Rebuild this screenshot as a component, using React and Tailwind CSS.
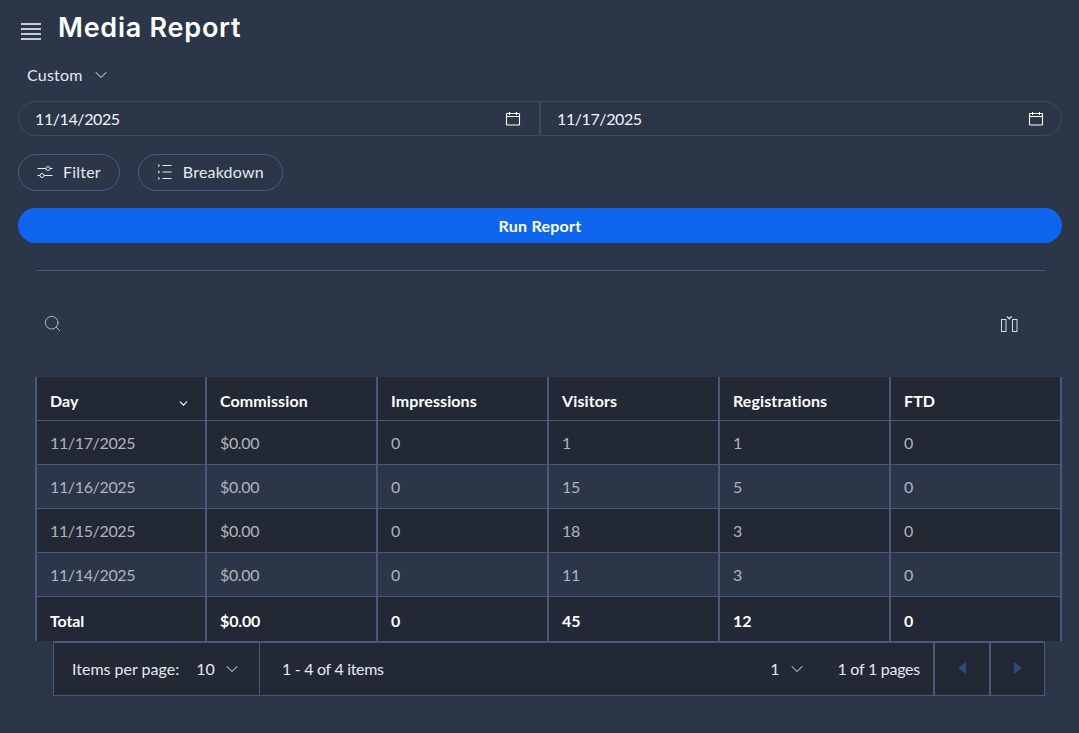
import { ChevronDown, Search } from 'lucide-react';

const columns = ['Commission', 'Impressions', 'Visitors', 'Registrations', 'FTD'];

const rows = [
    ['11/17/2025', '$0.00', '0', '1', '1', '0'],
    ['11/16/2025', '$0.00', '0', '15', '5', '0'],
    ['11/15/2025', '$0.00', '0', '18', '3', '0'],
    ['11/14/2025', '$0.00', '0', '11', '3', '0'],
];

const totals = ['Total', '$0.00', '0', '45', '12', '0'];

function CalendarIcon() {
    return (
        <svg width="16" height="16" viewBox="0 0 16 16" fill="none" stroke="currentColor" strokeWidth="1.1">
            <rect x="1.5" y="2.5" width="13" height="11.5" rx="0.5" />
            <path d="M1.5 5.5h13M4.5 1v3M11.5 1v3" />
        </svg>
    );
}

function FilterIcon() {
    return (
        <svg width="16" height="16" viewBox="0 0 16 16" fill="none" stroke="currentColor" strokeWidth="1">
            <path d="M0.5 4.5h8.5M13 4.5h2.5M0.5 11.5h2.5M7 11.5h8.5" />
            <circle cx="11" cy="4.5" r="2" />
            <circle cx="5" cy="11.5" r="2" />
        </svg>
    );
}

function BreakdownIcon() {
    return (
        <svg width="16" height="16" viewBox="0 0 16 16" fill="none" stroke="currentColor" strokeWidth="1">
            <path d="M5.5 1.5h9M5.5 8h9M5.5 14.5h9" />
            <path d="M1 0.4l1.6 1.1L1 2.6M1 6.9L2.6 8 1 9.1M1 13.4l1.6 1.1L1 15.6" />
        </svg>
    );
}

function ColumnsIcon() {
    return (
        <svg width="18" height="16" viewBox="0 0 18 16" fill="none" stroke="currentColor" strokeWidth="1">
            <rect x="0.5" y="3.5" width="4.5" height="12" />
            <rect x="11.5" y="3.5" width="4.5" height="12" />
            <path d="M6 0.5l2.3 2.3L10.6 0.5" strokeWidth="1.4" />
        </svg>
    );
}

function DateField({ value, className = '' }) {
    return (
        <div className={`flex h-full items-center justify-between pl-[16px] pt-[1px] ${className}`}>
            <span className="text-[16px] tracking-[-0.4px] text-[#f2f4f8]">{value}</span>
            <CalendarIcon />
        </div>
    );
}

function OutlineButton({ icon, label }) {
    return (
        <button className="flex h-[37px] items-center gap-[10px] rounded-full border border-[#4a5c85] pb-[1px] pl-[18px] pr-[18px] text-[16px] tracking-[0.2px] text-[#e6e9ef]">
            {icon}
            {label}
        </button>
    );
}

export default function App() {
    return (
        <div className="h-[733px] overflow-hidden bg-[#2b3649] font-['Lato',sans-serif] text-white">
            <div className="pl-[18px] pr-[17px]">
                <header className="flex h-[54px] items-center pl-[3px]">
                    <div className="mt-[8px] flex w-[20px] flex-col gap-[3px]">
                        <span className="h-[2px] bg-white/75" />
                        <span className="h-[2px] bg-white/75" />
                        <span className="h-[2px] bg-white/75" />
                        <span className="h-[2px] bg-white/75" />
                    </div>
                    <h1 className="ml-[17px] font-['Inter',sans-serif] text-[27px] font-semibold leading-none tracking-[0.75px] text-white">Media Report</h1>
                </header>

                <div className="flex h-[43px] items-center gap-[8px] pb-[2px] pl-[9px] text-[16px] tracking-[0.2px] text-[#e6e9ef]">
                    Custom
                    <ChevronDown size={20} strokeWidth={1.25} className="text-[#c3cad6]" />
                </div>

                <div className="mt-[4px] flex h-[35px] items-center rounded-full border border-[#3e4a60]">
                    <DateField value="11/14/2025" className="w-[522px] shrink-0 border-r-2 border-[#3e4a60] pr-[18px]" />
                    <DateField value="11/17/2025" className="flex-1 pr-[17px]" />
                </div>

                <div className="mt-[18px] flex gap-[18px]">
                    <OutlineButton icon={<FilterIcon />} label="Filter" />
                    <OutlineButton icon={<BreakdownIcon />} label="Breakdown" />
                </div>

                <button className="mt-[17px] h-[35px] w-full rounded-full bg-[#0f66ee] text-[16px] font-bold tracking-[0.25px] text-white">
                    Run Report
                </button>

                <div className="ml-[18px] mr-[17px] mt-[27px] h-px bg-[#48597c]" />

                <div className="ml-[18px] mr-[43px] flex h-[106px] items-center justify-between pb-[1px] pl-[7px]">
                    <Search size={19} strokeWidth={1.1} className="text-[#c4c9d2]" />
                    <span className="text-[#d5dae4]"><ColumnsIcon /></span>
                </div>
            </div>

            <table className="ml-[35px] w-[1027px] table-fixed border-separate border-spacing-0 border-l-2 border-[#48597c] text-[16px]">
                <thead>
                    <tr className="h-[44px] bg-[#222834]">
                        <th className="w-[170px] border-b border-r-2 border-[#48597c] px-[13px] pt-[4px] text-left font-bold tracking-[0.1px] text-white">
                            <div className="flex items-center justify-between pr-[2px]">
                                Day
                                <ChevronDown size={13} strokeWidth={2} className="mt-[5px]" />
                            </div>
                        </th>
                        {columns.map((column) => (
                            <th key={column} className="border-b border-r-2 border-[#48597c] px-[13px] pt-[4px] text-left font-bold tracking-[0.1px] text-white">{column}</th>
                        ))}
                    </tr>
                </thead>
                <tbody>
                    {rows.map((row, i) => (
                        <tr key={row[0]} className={i % 2 === 0 ? 'h-[44px] bg-[#222834]' : 'h-[44px] bg-[#2b3649]'}>
                            {row.map((cell, j) => (
                                <td key={j} className="border-b border-r-2 border-[#48597c] px-[13px] pt-[1px] tracking-[-0.35px] text-[#b0b4bb]">{cell}</td>
                            ))}
                        </tr>
                    ))}
                    <tr className="h-[44px] bg-[#222834]">
                        {totals.map((cell, j) => (
                            <td key={j} className="border-r-2 border-[#48597c] px-[13px] pt-[4px] font-bold tracking-[-0.15px] text-white">{cell}</td>
                        ))}
                    </tr>
                </tbody>
            </table>

            <div className="ml-[53px] flex h-[55px] w-[992px] items-center border border-t-2 border-[#48597c] bg-[#222834] text-[16px] text-[#e6e9ef]">
                <div className="flex h-full w-[206px] items-center border-r border-[#48597c] pl-[18px]">
                    Items per page:
                    <span className="ml-[17px]">10</span>
                    <ChevronDown size={20} strokeWidth={1.25} className="ml-[7px] text-[#c3cad6]" />
                </div>
                <span className="ml-[22px] tracking-[-0.3px]">1 - 4 of 4 items</span>
                <div className="ml-auto flex h-full items-center">
                    <span>1</span>
                    <ChevronDown size={20} strokeWidth={1.25} className="ml-[8px] text-[#c3cad6]" />
                    <span className="ml-[30px] mr-[13px] tracking-[-0.25px]">1 of 1 pages</span>
                    <div className="flex h-full w-[56px] items-center justify-center border-l-2 border-[#48597c] pb-[3px]">
                        <span className="h-0 w-0 border-y-[6px] border-r-[8px] border-y-transparent border-r-[#30487c]" />
                    </div>
                    <div className="flex h-full w-[55px] items-center justify-center border-l-2 border-[#48597c] pb-[3px]">
                        <span className="h-0 w-0 border-y-[6px] border-l-[8px] border-y-transparent border-l-[#30487c]" />
                    </div>
                </div>
            </div>
        </div>
    );
}
